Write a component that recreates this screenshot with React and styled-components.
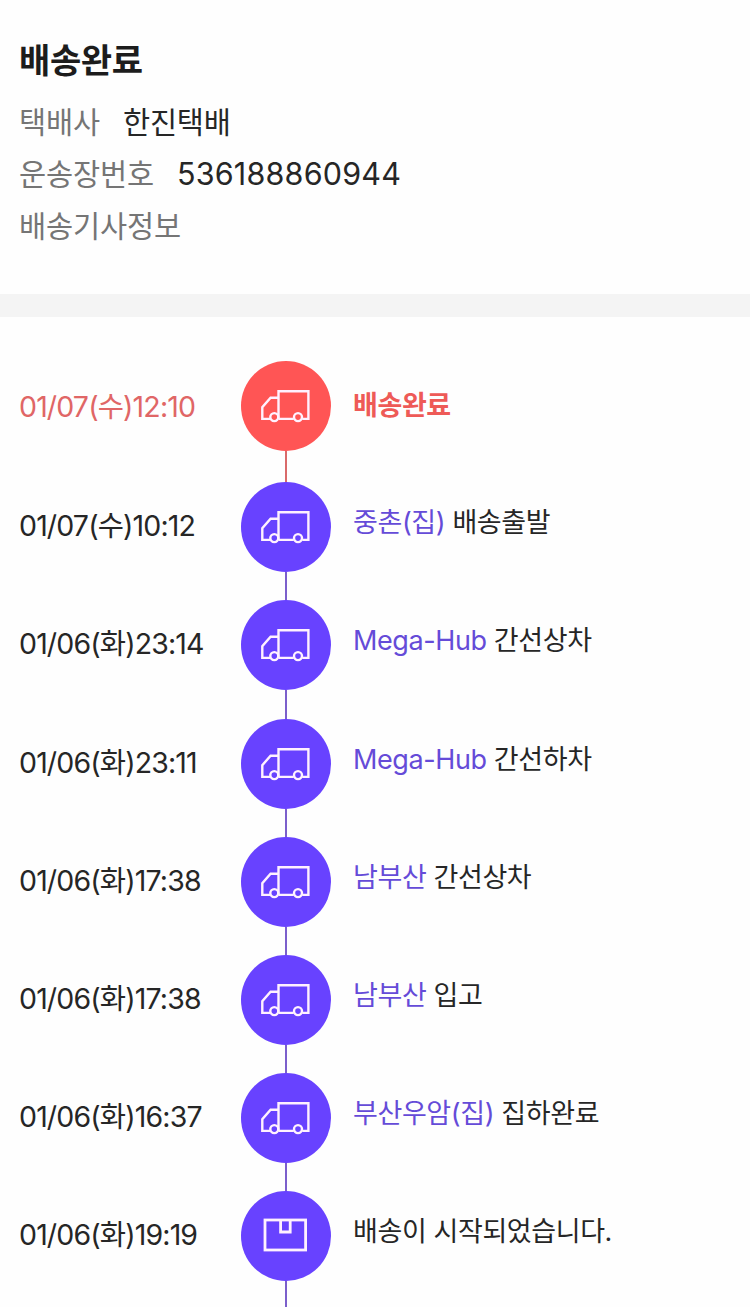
import * as React from 'react';
import styled, { createGlobalStyle } from 'styled-components';

const steps = [
    { date: '01/07(수)12:10', status: '배송완료', icon: 'truck', height: 121, done: true },
    { date: '01/07(수)10:12', place: '중촌(집)', status: '배송출발', icon: 'truck', height: 118 },
    { date: '01/06(화)23:14', place: 'Mega-Hub', status: '간선상차', icon: 'truck', height: 119 },
    { date: '01/06(화)23:11', place: 'Mega-Hub', status: '간선하차', icon: 'truck', height: 118 },
    { date: '01/06(화)17:38', place: '남부산', status: '간선상차', icon: 'truck', height: 118 },
    { date: '01/06(화)17:38', place: '남부산', status: '입고', icon: 'truck', height: 118 },
    { date: '01/06(화)16:37', place: '부산우암(집)', status: '집하완료', icon: 'truck', height: 118 },
    { date: '01/06(화)19:19', status: '배송이 시작되었습니다.', icon: 'box', height: 118 }
];

const Truck = () => (
    <svg width="90" height="90" viewBox="0 0 90 90" fill="none" stroke="currentColor" strokeWidth="2.4">
        <path d="M29.2 57.9H21.3V46.2L29.6 36.8H37.3" />
        <path d="M37.5 57.9H52.8M61.2 57.9H67.4V30.3H37.5V57.9" />
        <circle cx="33.3" cy="56.1" r="4" />
        <circle cx="57" cy="56.1" r="4" />
    </svg>
);

const Box = () => (
    <svg width="90" height="90" viewBox="0 0 90 90" fill="none" stroke="currentColor" strokeWidth="2.8">
        <rect x="24" y="29" width="40.6" height="30" />
        <path d="M39.6 29V41H49.2V29" />
    </svg>
);

export default function App() {
    return (
        <Page>
            <GlobalStyle />
            <Summary>
                <Title>배송완료</Title>
                <Info>
                    <Label>택배사</Label>
                    <Value>한진택배</Value>
                </Info>
                <Info>
                    <Label>운송장번호</Label>
                    <Value $numeric>536188860944</Value>
                </Info>
                <Info>
                    <Label>배송기사정보</Label>
                </Info>
            </Summary>
            <Timeline>
                {steps.map((step, i) => (
                    <Step key={i} $height={step.height}>
                        <StepDate $done={step.done}>{step.date}</StepDate>
                        <Track>
                            <Badge $done={step.done}>{step.icon === 'box' ? <Box /> : <Truck />}</Badge>
                            <Line $done={step.done} />
                        </Track>
                        <Status $done={step.done}>
                            {step.place && <Place>{step.place}</Place>}
                            {step.place && ' '}
                            {step.status}
                        </Status>
                    </Step>
                ))}
            </Timeline>
        </Page>
    );
}

const GlobalStyle = createGlobalStyle`
    * {
        box-sizing: border-box;
    }

    body {
        margin: 0;
        background: #fefefe;
        overflow: hidden;
    }
`;

const Page = styled.div`
    width: 750px;
    height: 1307px;
    overflow: hidden;
    background: #fefefe;
    color: #262626;
    font-family: Inter, 'Noto Sans CJK KR', sans-serif;
`;

const Summary = styled.header`
    height: 317px;
    padding: 37px 19px 0;
    border-bottom: 23px solid #f4f4f4;
`;

const Title = styled.h1`
    margin: 0 0 11px;
    color: #1c1c1c;
    font-size: 34px;
    line-height: 48px;
    font-weight: 700;
    letter-spacing: -0.4px;
`;

const Info = styled.div`
    display: flex;
    gap: 23px;
    height: 52px;
    font-size: 29.5px;
    line-height: 52px;
    white-space: nowrap;
`;

const Label = styled.span`
    color: #757575;
    letter-spacing: -0.15px;
`;

const Value = styled.span`
    font-size: ${(props) => (props.$numeric ? '30.5px' : '29.5px')};
    letter-spacing: ${(props) => (props.$numeric ? '0.2px' : '-0.2px')};
`;

const Timeline = styled.ul`
    margin: 0;
    padding: 44px 19px 0;
    list-style: none;
`;

const Step = styled.li`
    display: grid;
    grid-template-columns: 222px 90px 1fr;
    height: ${(props) => props.$height}px;
`;

const StepDate = styled.span`
    padding-top: ${(props) => (props.$done ? '25px' : '23px')};
    color: ${(props) => (props.$done ? '#e06666' : 'inherit')};
    font-size: 28.5px;
    line-height: 42px;
    letter-spacing: -0.85px;
    white-space: nowrap;
`;

const Track = styled.div`
    display: flex;
    flex-direction: column;
    align-items: center;
`;

const Badge = styled.div`
    flex: none;
    width: 90px;
    height: 90px;
    border-radius: 50%;
    background: ${(props) => (props.$done ? '#ff5555' : '#6842ff')};
    color: #fff1ff;
`;

const Line = styled.div`
    flex: 1;
    width: 2px;
    background: ${(props) => (props.$done ? '#d96a6a' : '#7b5fcb')};
`;

const Status = styled.span`
    padding: ${(props) => (props.$done ? '24px' : '20px')} 0 0 22px;
    color: ${(props) => (props.$done ? '#ee5a57' : 'inherit')};
    font-size: 27px;
    font-weight: ${(props) => (props.$done ? 700 : 400)};
    line-height: 42px;
    letter-spacing: -0.4px;
    white-space: nowrap;
`;

const Place = styled.span`
    color: #654bd8;
`;
